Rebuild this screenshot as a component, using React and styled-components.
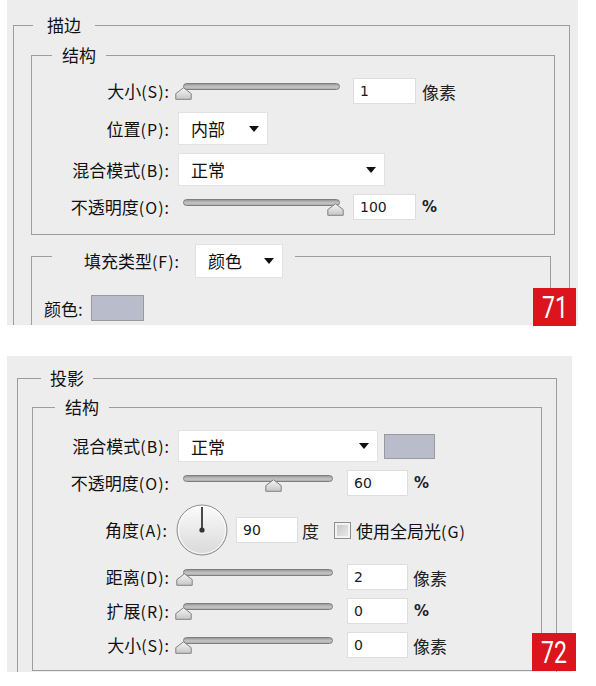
import React from "react";
import styled, { createGlobalStyle } from "styled-components";

const Global = createGlobalStyle`
  html, body { margin: 0; padding: 0; background: #ffffff; }
  body {
    font-family: "Noto Sans CJK SC", "Noto Sans", sans-serif;
    color: #111111;
  }
`;

const Page = styled.div`
  width: 596px;
  height: 686px;
  box-sizing: border-box;
  padding-left: 7px;
  display: flex;
  flex-direction: column;
  gap: 31px;
`;

const Panel = styled.section`
  position: relative;
  width: ${(p) => p.$w}px;
  height: ${(p) => p.$h}px;
  flex: none;
`;

const Clip = styled.div`
  height: 100%;
  overflow: hidden;
  background: #ededed;
  display: flow-root;
`;

const Group = styled.fieldset`
  margin: ${(p) => p.$m};
  padding: ${(p) => p.$p};
  border: 1px solid #9d9d9d;
  min-width: 0;
`;

const Caption = styled.legend`
  margin-left: ${(p) => p.$ml}px;
  padding: 0 ${(p) => p.$pr ?? p.$pad}px 0 ${(p) => p.$pad}px;
  height: ${(p) => p.$h || 20}px;
  line-height: 20px;
  font-size: 17px;
  box-sizing: border-box;
`;

const CaptionLine = styled.div`
  display: flex;
  align-items: flex-start;
  gap: ${(p) => p.$gap}px;
`;

const Rows = styled.div`
  display: flex;
  flex-direction: column;
  gap: 8px;
`;

const Row = styled.div`
  display: flex;
  align-items: center;
`;

const FieldLabel = styled.div`
  flex: none;
  width: ${(p) => p.$w}px;
  margin-right: ${(p) => p.$gap ?? 8}px;
  text-align: right;
  font-size: 17px;
  line-height: ${(p) => p.$lh || 26}px;
  white-space: nowrap;
`;

const Key = styled.span`
  font-size: 16px;
  letter-spacing: 1px;
`;

const DropBox = styled.div`
  flex: none;
  width: ${(p) => p.$w}px;
  height: ${(p) => p.$h}px;
  box-sizing: border-box;
  background: #ffffff;
  border: 1px solid #e2e2e2;
  display: flex;
  align-items: center;
  justify-content: space-between;
  padding: 0 8px 0 12px;
  font-size: 17px;
`;

const Dropdown = ({ w, h = 32, children }) => (
  <DropBox $w={w} $h={h}>
    <span>{children}</span>
    <svg width="10" height="6" viewBox="0 0 10 6">
      <polygon points="0,0 10,0 5,6" fill="#111" />
    </svg>
  </DropBox>
);

const SliderBox = styled.div`
  position: relative;
  flex: none;
  width: ${(p) => p.$w}px;
  height: 26px;
`;

const Track = styled.div`
  margin: 5px 0 0 5px;
  height: 7px;
  box-sizing: border-box;
  border: 1px solid #7e7e7e;
  border-radius: 4px;
  background: linear-gradient(#999999, #c6c6c6 60%, #adadad);
`;

const ThumbWrap = styled.div`
  position: absolute;
  top: 9px;
  width: 17px;
  height: 13px;
  line-height: 0;
`;

const Slider = ({ w, value }) => (
  <SliderBox $w={w}>
    <Track />
    <ThumbWrap style={{ left: 5 + value * (w - 5) - 8.5 }}>
      <svg width="17" height="13" viewBox="0 0 17 13">
        <defs>
          <linearGradient id="thumbFill" x1="0" y1="0" x2="0" y2="1">
            <stop offset="0" stopColor="#f6f6f6" />
            <stop offset="1" stopColor="#c6c6c6" />
          </linearGradient>
        </defs>
        <path
          d="M8.5 0.8 L16.2 6.6 V12.3 H0.8 V6.6 Z"
          fill="url(#thumbFill)"
          stroke="#808080"
          strokeWidth="1"
        />
      </svg>
    </ThumbWrap>
  </SliderBox>
);

const NumBox = styled.input`
  flex: none;
  width: ${(p) => p.$w}px;
  height: 26px;
  box-sizing: border-box;
  margin: 0 0 0 ${(p) => p.$ml}px;
  padding: 0 0 0 6px;
  border: 1px solid #dedede;
  background: #ffffff;
  font-family: "DejaVu Sans", sans-serif;
  font-size: 14px;
  color: #1a1a1a;
  outline: none;
`;

const Unit = styled.span`
  margin-left: ${(p) => p.$ml}px;
  font-size: ${(p) => (p.$pct ? 15 : 17)}px;
  font-family: ${(p) =>
    p.$pct ? '"DejaVu Sans", sans-serif' : '"Noto Sans CJK SC", sans-serif'};
  font-weight: ${(p) => (p.$pct ? 700 : 400)};
  color: #222222;
  white-space: nowrap;
`;

const Swatch = styled.div`
  flex: none;
  width: ${(p) => p.$w}px;
  height: ${(p) => p.$h}px;
  margin-left: ${(p) => p.$ml}px;
  box-sizing: border-box;
  background: #b8bccb;
  border: 1px solid #9a9a9a;
`;

const DialWrap = styled.div`
  flex: none;
  width: 52px;
  height: 52px;
  line-height: 0;
`;

const Dial = () => (
  <DialWrap>
    <svg width="52" height="52" viewBox="0 0 52 52">
      <defs>
        <linearGradient id="dialFill" x1="0" y1="0" x2="0" y2="1">
          <stop offset="0" stopColor="#fbfbfb" />
          <stop offset="1" stopColor="#d9d9d9" />
        </linearGradient>
      </defs>
      <circle cx="26" cy="26" r="25" fill="url(#dialFill)" stroke="#8e8e8e" strokeWidth="1" />
      <circle cx="26" cy="26" r="23.5" fill="none" stroke="#ffffff" strokeWidth="1" opacity="0.8" />
      <line x1="26" y1="26" x2="26" y2="3" stroke="#4a4a4a" strokeWidth="2" />
      <circle cx="26" cy="26" r="2.6" fill="#333" />
    </svg>
  </DialWrap>
);

const CheckBox = styled.div`
  flex: none;
  width: 17px;
  height: 17px;
  box-sizing: border-box;
  margin-left: ${(p) => p.$ml}px;
  border: 1px solid #8f8f8f;
  box-shadow: inset 0 0 0 2px #f3f3f3;
  background: linear-gradient(135deg, #c4c4c4, #ececec);
`;

const CheckText = styled.span`
  margin-left: 5px;
  font-size: 17px;
  white-space: nowrap;
`;

const Badge = styled.div`
  position: absolute;
  right: ${(p) => p.$right}px;
  bottom: ${(p) => p.$bottom}px;
  width: ${(p) => p.$w}px;
  height: 38px;
  background: #dc141e;
  color: #ffffff;
  display: flex;
  align-items: center;
  justify-content: center;
  font-family: Roboto, "Liberation Sans", sans-serif;
  font-size: 32px;
`;

const BadgeText = styled.span`
  display: inline-block;
  transform: scaleX(0.72);
  line-height: 1;
`;

const ColorRow = styled.div`
  display: flex;
  align-items: center;
  padding-left: 12px;
  font-size: 17px;
`;

export default function App() {
  return (
    <>
      <Global />
      <Page>
        <Panel $w={571} $h={325}>
          <Clip>
            <Group $m="15px 8px 0 6px" $p="0 0 30px 0">
              <Caption $ml={19} $pad={14}>描边</Caption>
              <Group $m="10px 14px 0 17px" $p="13px 0 14px 0">
                <Caption $ml={20} $pad={10}>结构</Caption>
                <Rows>
                  <Row>
                    <FieldLabel $w={138}>大小<Key>(S):</Key></FieldLabel>
                    <Slider w={162} value={0.004} />
                    <NumBox $w={63} $ml={13} readOnly value="1" />
                    <Unit $ml={6}>像素</Unit>
                  </Row>
                  <Row>
                    <FieldLabel $w={138} $lh={32}>位置<Key>(P):</Key></FieldLabel>
                    <Dropdown w={90} h={33}>内部</Dropdown>
                  </Row>
                  <Row>
                    <FieldLabel $w={138} $lh={32}>混合模式<Key>(B):</Key></FieldLabel>
                    <Dropdown w={207} h={33}>正常</Dropdown>
                  </Row>
                  <Row>
                    <FieldLabel $w={138}>不透明度<Key>(O):</Key></FieldLabel>
                    <Slider w={162} value={0.97} />
                    <NumBox $w={63} $ml={13} readOnly value="100" />
                    <Unit $ml={6} $pct>%</Unit>
                  </Row>
                </Rows>
              </Group>
              <Group $m="9px 18px 0 17px" $p="27px 0 20px 0">
                <Caption $ml={20} $pad={0} $pr={12} $h={24}>
                  <CaptionLine $gap={15}>
                    <FieldLabel $w={128} $gap={0} $lh={34}>填充类型<Key>(F):</Key></FieldLabel>
                    <Dropdown w={88} h={34}>颜色</Dropdown>
                  </CaptionLine>
                </Caption>
                <ColorRow>
                  颜色:
                  <Swatch $w={53} $h={26} $ml={8} />
                </ColorRow>
              </Group>
            </Group>
          </Clip>
          <Badge $right={2} $bottom={-1} $w={43}>
            <BadgeText>71</BadgeText>
          </Badge>
        </Panel>

        <Panel $w={565} $h={316}>
          <Clip>
            <Group $m="12px 15px 0 10px" $p="0 0 30px 0">
              <Caption $ml={23} $pad={9}>投影</Caption>
              <Group $m="9px 14px 0 14px" $p="13px 0 12px 0">
                <Caption $ml={22} $pad={10}>结构</Caption>
                <Rows>
                  <Row>
                    <FieldLabel $w={137} $lh={32}>混合模式<Key>(B):</Key></FieldLabel>
                    <Dropdown w={200} h={32}>正常</Dropdown>
                    <Swatch $w={51} $h={25} $ml={6} />
                  </Row>
                  <Row>
                    <FieldLabel $w={137}>不透明度<Key>(O):</Key></FieldLabel>
                    <Slider w={155} value={0.6} />
                    <NumBox $w={61} $ml={14} readOnly value="60" />
                    <Unit $ml={6} $pct>%</Unit>
                  </Row>
                  <Row>
                    <FieldLabel $w={135} $lh={52}>角度<Key>(A):</Key></FieldLabel>
                    <Dial />
                    <NumBox $w={62} $ml={8} readOnly value="90" />
                    <Unit $ml={4}>度</Unit>
                    <CheckBox $ml={15} />
                    <CheckText>使用全局光<Key>(G)</Key></CheckText>
                  </Row>
                  <Row>
                    <FieldLabel $w={137}>距离<Key>(D):</Key></FieldLabel>
                    <Slider w={155} value={0.01} />
                    <NumBox $w={61} $ml={14} readOnly value="2" />
                    <Unit $ml={5}>像素</Unit>
                  </Row>
                  <Row>
                    <FieldLabel $w={137}>扩展<Key>(R):</Key></FieldLabel>
                    <Slider w={155} value={0} />
                    <NumBox $w={61} $ml={14} readOnly value="0" />
                    <Unit $ml={6} $pct>%</Unit>
                  </Row>
                  <Row>
                    <FieldLabel $w={137}>大小<Key>(S):</Key></FieldLabel>
                    <Slider w={155} value={0} />
                    <NumBox $w={61} $ml={14} readOnly value="0" />
                    <Unit $ml={5}>像素</Unit>
                  </Row>
                </Rows>
              </Group>
            </Group>
          </Clip>
          <Badge $right={-4} $bottom={1} $w={44}>
            <BadgeText>72</BadgeText>
          </Badge>
        </Panel>
      </Page>
    </>
  );
}
